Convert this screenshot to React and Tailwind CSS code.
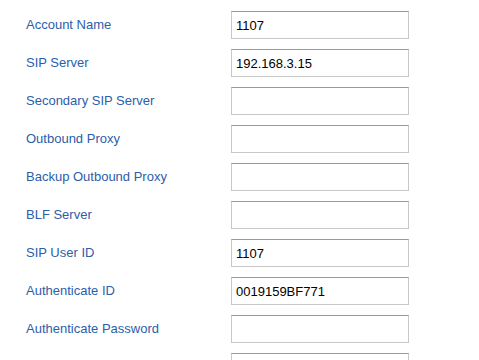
import React from 'react';

const fields = [
  { label: 'Account Name', value: '1107' },
  { label: 'SIP Server', value: '192.168.3.15' },
  { label: 'Secondary SIP Server', value: '' },
  { label: 'Outbound Proxy', value: '' },
  { label: 'Backup Outbound Proxy', value: '' },
  { label: 'BLF Server', value: '' },
  { label: 'SIP User ID', value: '1107' },
  { label: 'Authenticate ID', value: '0019159BF771' },
  { label: 'Authenticate Password', value: '' },
  { label: '', value: '' },
];

const App = () => {
  return (
    <div className="bg-white pt-[6px] pl-[26px] font-['Liberation_Sans',Arial,sans-serif] text-[13px]">
      {fields.map((f, i) => (
        <div key={i} className="flex items-center h-[38px]">
          <label className="w-[205px] text-[#2c5eaa]">{f.label}</label>
          <input
            type={f.label === 'Authenticate Password' ? 'password' : 'text'}
            defaultValue={f.value}
            className="w-[178px] h-[28px] px-[4px] text-[13px] text-black bg-white border border-[#c8c8c8] border-t-[#999] outline-none"
          />
        </div>
      ))}
    </div>
  );
};

export default App;
